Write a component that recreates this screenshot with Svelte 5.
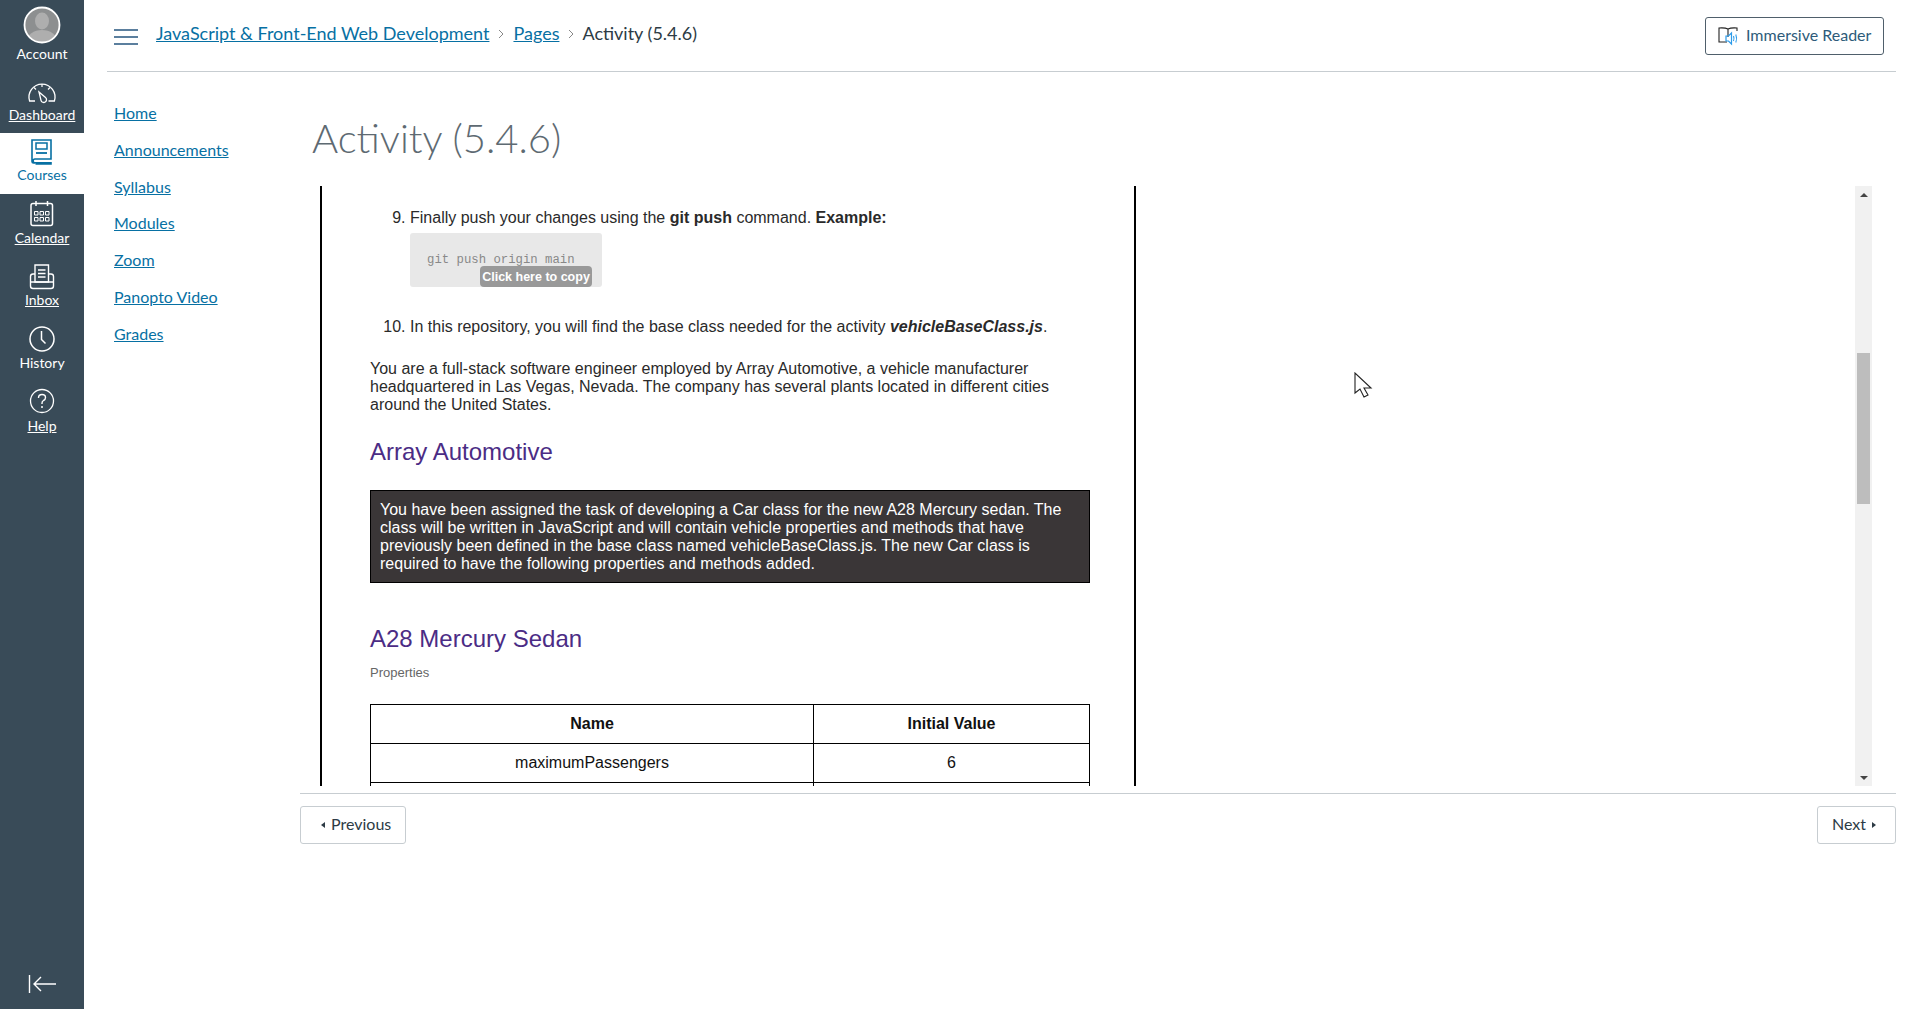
<script>
  const navItems = [
    { label: 'Account', icon: 'account' },
    { label: 'Dashboard', icon: 'dashboard', underline: true },
    { label: 'Courses', icon: 'courses', active: true },
    { label: 'Calendar', icon: 'calendar', underline: true },
    { label: 'Inbox', icon: 'inbox', underline: true },
    { label: 'History', icon: 'history' },
    { label: 'Help', icon: 'help', underline: true }
  ];
  const courseLinks = ['Home', 'Announcements', 'Syllabus', 'Modules', 'Zoom', 'Panopto Video', 'Grades'];
</script>

<div class="app">
  <nav class="sidebar">
    {#each navItems as item}
      <a class="nav-item" class:active={item.active} class:underline={item.underline} href="#top">
        <svg class="nav-icon" viewBox="0 0 44 44" width="44" height="44" aria-hidden="true">
          {#if item.icon === 'account'}
            <defs><clipPath id="avatar"><circle cx="22" cy="22" r="17" /></clipPath></defs>
            <circle cx="22" cy="22" r="17.5" fill="#8d8f90" />
            <g clip-path="url(#avatar)" fill="#aeaeae">
              <ellipse cx="22" cy="18" rx="7" ry="8.5" />
              <ellipse cx="22" cy="38" rx="15" ry="11" />
            </g>
            <circle cx="22" cy="22" r="17.5" fill="none" stroke="#fff" stroke-width="1.8" />
          {:else if item.icon === 'dashboard'}
            <path d="M15 31 H9.600 A13 13 0 1 1 34.400 31 H28.500" fill="none" stroke="currentColor" stroke-width="1.300" />
            <path d="M19 22 L25.500 27.500 a2.800 2.800 0 1 1 -4.500 2.800 z" fill="none" stroke="currentColor" stroke-width="1.300" />
            <path d="M22 14 v3 M14 17.500 l2 2 M30 17.500 l-2 2" stroke="currentColor" stroke-width="1.200" />
          {:else if item.icon === 'courses'}
            <path d="M15 34 h-1.500 a1.500 1.500 0 0 1 -1.500 -1.500 v-21.500 h19 v19 h-16 a1.800 1.800 0 0 0 0 3.800 h16 v1.200 h-15.500" fill="none" stroke="currentColor" stroke-width="1.600" />
            <rect x="16" y="14" width="11" height="6" fill="none" stroke="currentColor" stroke-width="1.500" />
            <path d="M16 24 h11" stroke="currentColor" stroke-width="1.800" />
          {:else if item.icon === 'calendar'}
            <rect x="11" y="11.500" width="21.500" height="22" rx="2" fill="none" stroke="currentColor" stroke-width="1.500" />
            <path d="M16 9 v5 M27.500 9 v5" stroke="currentColor" stroke-width="1.500" />
            <path d="M14.500 19.500 h3.500 v3.500 h-3.500 z M20 19.500 h3.500 v3.500 h-3.500 z M25.500 19.500 h3.500 v3.500 h-3.500 z M14.500 25.500 h3.500 v3.500 h-3.500 z M20 25.500 h3.500 v3.500 h-3.500 z M25.500 25.500 h3.500 v3.500 h-3.500 z" fill="none" stroke="currentColor" stroke-width="1" />
          {:else if item.icon === 'inbox'}
            <path d="M15 10 h13.500 v17 h-13.500 z" fill="none" stroke="currentColor" stroke-width="1.400" />
            <path d="M18 15 h7.500 M18 18.500 h7.500 M18 22 h7.500" stroke="currentColor" stroke-width="1.400" />
            <path d="M15 19 h-2 q-2.500 0 -2.500 2.500 v9.500 q0 2.500 2.500 2.500 h18 q2.500 0 2.500 -2.500 v-9.500 q0 -2.500 -2.500 -2.500 h-2.500 M10.500 27 h23" fill="none" stroke="currentColor" stroke-width="1.400" />
          {:else if item.icon === 'history'}
            <circle cx="22" cy="22" r="12" fill="none" stroke="currentColor" stroke-width="1.500" />
            <path d="M21.500 14 v8.500 l4 4" fill="none" stroke="currentColor" stroke-width="1.500" />
          {:else if item.icon === 'help'}
            <circle cx="22" cy="22" r="11.500" fill="none" stroke="currentColor" stroke-width="1.300" />
            <path d="M18.500 19 q0 -3.500 3.500 -3.500 q3.500 0 3.500 3 q0 2 -2 3 q-1.500 .8 -1.500 2.800 v.7" fill="none" stroke="currentColor" stroke-width="1.400" />
            <circle cx="22" cy="28" r="1" fill="currentColor" />
          {/if}
        </svg>
        <span class="nav-label">{item.label}</span>
      </a>
    {/each}
    <button class="collapse" aria-label="Collapse navigation">
      <svg viewBox="0 0 28 22" width="28" height="22" aria-hidden="true">
        <path d="M1.500 2 v18 M28 11 h-22 M13 4 l-7 7 l7 7" fill="none" stroke="#fff" stroke-width="1.400" />
      </svg>
    </button>
  </nav>

  <div class="main">
    <header class="topbar">
      <button class="hamburger" aria-label="Toggle course menu">
        <span></span><span></span><span></span>
      </button>
      <div class="crumbs">
        <a href="#top">JavaScript &amp; Front-End Web Development</a>
        <svg class="sep" viewBox="0 0 6 10" width="6" height="10" aria-hidden="true"><path d="M1 1 l4 4 l-4 4" fill="none" stroke="#888" /></svg>
        <a href="#top">Pages</a>
        <svg class="sep last" viewBox="0 0 6 10" width="6" height="10" aria-hidden="true"><path d="M1 1 l4 4 l-4 4" fill="none" stroke="#888" /></svg>
        <span>Activity (5.4.6)</span>
      </div>
      <button class="reader">
        <svg viewBox="0 0 22 20" width="22" height="20" aria-hidden="true">
          <path d="M10 3 q-3 -1.500 -9 -1 v14 h8 M10 3 v8 M10 3 q3 -1.500 9 -1 v3" fill="none" stroke="#222" stroke-width="1.100" />
          <path d="M8 10 h2.500 l3 -3 v11 l-3 -3 h-2.500 z" fill="none" stroke="#2b9bea" stroke-width="1.200" />
          <path d="M15.500 10 q1 2.500 0 5 M17.800 8.500 q1.700 4 0 8" fill="none" stroke="#2b9bea" stroke-width="1.100" />
        </svg>
        Immersive Reader
      </button>
    </header>

    <div class="body">
      <ul class="course-nav">
        {#each courseLinks as link}
          <li><a href="#top">{link}</a></li>
        {/each}
      </ul>

      <div class="content">
        <h1 class="title">Activity (5.4.6)</h1>

        <div class="viewer">
          <div class="page">
            <ol start="9">
              <li>Finally push your changes using the <b>git push</b> command. <b>Example:</b>
                <div class="code">
                  <code>git push origin main</code>
                  <button class="copy">Click here to copy</button>
                </div>
              </li>
            </ol>
            <ol class="next" start="10">
              <li>In this repository, you will find the base class needed for the activity <b><i>vehicleBaseClass.js</i></b>.</li>
            </ol>
            <p class="intro">You are a full-stack software engineer employed by Array Automotive, a vehicle manufacturer headquartered in Las Vegas, Nevada. The company has several plants located in different cities around the United States.</p>
            <h2 class="first">Array Automotive</h2>
            <div class="callout">You have been assigned the task of developing a Car class for the new A28 Mercury sedan. The class will be written in JavaScript and will contain vehicle properties and methods that have previously been defined in the base class named vehicleBaseClass.js. The new Car class is required to have the following properties and methods added.</div>
            <h2 class="second">A28 Mercury Sedan</h2>
            <p class="props">Properties</p>
            <table>
              <thead>
                <tr><th class="name">Name</th><th>Initial Value</th></tr>
              </thead>
              <tbody>
                <tr><td>maximumPassengers</td><td>6</td></tr>
                <tr><td></td><td></td></tr>
              </tbody>
            </table>
          </div>
          <div class="scrollbar">
            <span class="arrow up"></span>
            <div class="track"><div class="thumb"></div></div>
            <span class="arrow down"></span>
          </div>
        </div>

        <footer class="pager">
          <button class="page-btn prev"><span class="tri left"></span>Previous</button>
          <button class="page-btn next-btn">Next<span class="tri right"></span></button>
        </footer>
      </div>
    </div>
  </div>

  <svg class="cursor" viewBox="0 0 20 30" width="20" height="30" aria-hidden="true">
    <path d="M1 1 v20 l5 -4 l4 8 l4 -2 l-4 -7 h7 z" fill="#fff" stroke="#222" stroke-width="1.100" />
  </svg>
</div>

<style>
  :global(body) {
    margin: 0;
    background: #fff;
    font-family: Lato, "Liberation Sans", sans-serif;
  }

  .app {
    display: flex;
    height: 1009px;
    overflow: hidden;
    position: relative;
  }

  .sidebar {
    width: 84px;
    flex: none;
    background: #394b58;
    display: flex;
    flex-direction: column;
    align-items: stretch;
  }

  .nav-item {
    height: 62px;
    box-sizing: border-box;
    display: flex;
    flex-direction: column;
    align-items: center;
    color: #fff;
    text-decoration: none;
    font-size: 14px;
    line-height: 16px;
  }

  .nav-item:first-child {
    height: 67px;
    padding-top: 3px;
  }

  .nav-item:nth-child(2) {
    height: 66px;
    padding-top: 4px;
  }

  .nav-item.active {
    height: 61px;
    background: #fff;
    color: #0770a3;
  }

  .nav-item.underline .nav-label {
    text-decoration: underline;
  }

  .nav-icon {
    display: block;
    margin: -1px 0 -6px;
  }

  .nav-item:first-child .nav-icon {
    margin: 0 0 -1px;
  }

  .nav-item:nth-child(2) .nav-icon {
    margin-bottom: -7px;
  }

  .nav-item:nth-child(3) .nav-icon {
    margin-top: -4px;
  }

  .nav-item:nth-child(4) .nav-icon {
    margin-top: -2px;
  }

  .nav-item:nth-child(5) .nav-icon {
    margin-bottom: -7px;
  }

  .nav-item:nth-child(7) .nav-icon {
    margin-bottom: -5px;
  }

  .collapse {
    margin-top: auto;
    margin-bottom: 14px;
    align-self: center;
    background: none;
    border: 0;
    padding: 0;
    height: 22px;
  }

  .main {
    flex: 1;
    min-width: 0;
    margin: 0 24px 0 23px;
    display: flex;
    flex-direction: column;
  }

  .topbar {
    height: 71px;
    border-bottom: 1px solid #c7cdd1;
    display: flex;
    align-items: flex-start;
    flex: none;
  }

  .hamburger {
    width: 24px;
    margin: 29px 0 0 7px;
    padding: 0;
    background: none;
    border: 0;
    display: flex;
    flex-direction: column;
    gap: 5px;
  }

  .hamburger span {
    display: block;
    height: 2px;
    background: #5b7f9e;
  }

  .crumbs {
    margin: 21px 0 0 18px;
    display: flex;
    align-items: center;
    font-size: 18px;
    line-height: 24px;
    color: #2d3b45;
  }

  .crumbs a {
    color: #0770a3;
  }

  .sep {
    margin: 2px 9px 0 9px;
  }

  .sep.last {
    margin: 2px 8px 0 9px;
  }

  .reader {
    margin: 17px 12px 0 auto;
    width: 179px;
    height: 38px;
    box-sizing: border-box;
    background: #fff;
    border: 1px solid #4f5f6b;
    border-radius: 3px;
    color: #2d5b7a;
    font: 16px Lato, sans-serif;
    display: flex;
    align-items: center;
    gap: 6px;
    padding: 0 0 3px 12px;
  }

  .reader svg {
    margin-top: 3px;
  }

  .body {
    flex: 1;
    display: flex;
    min-height: 0;
  }

  .course-nav {
    width: 193px;
    flex: none;
    box-sizing: border-box;
    list-style: none;
    margin: 0;
    padding: 31px 0 0 7px;
    font-size: 16px;
    line-height: 20px;
  }

  .course-nav li {
    margin-bottom: 16.800px;
  }

  .course-nav a {
    color: #0770a3;
  }

  .content {
    flex: 1;
    min-width: 0;
  }

  .title {
    margin: 0;
    height: 114px;
    box-sizing: border-box;
    padding: 41px 0 0 12px;
    font-size: 40px;
    line-height: 50px;
    font-weight: 300;
    color: #5e6a72;
  }

  .viewer {
    display: flex;
    justify-content: space-between;
    height: 600px;
    margin: 0 24px 0 20px;
  }

  .page {
    width: 816px;
    box-sizing: border-box;
    height: 600px;
    overflow: hidden;
    border-left: 2px solid #000;
    border-right: 2px solid #000;
    padding: 23px 44px 0 48px;
    font-family: "Liberation Sans", Arial, sans-serif;
    font-size: 16px;
    line-height: 18px;
    color: #2a2a2a;
  }

  ol {
    margin: 0;
    padding-left: 40px;
  }

  ol.next {
    margin-top: 31px;
  }

  .code {
    position: relative;
    width: 192px;
    height: 54px;
    margin-top: 6px;
    background: #e8e8e8;
    border-radius: 3px;
  }

  .code code {
    position: absolute;
    left: 17px;
    top: 18px;
    font-family: "Liberation Mono", monospace;
    font-size: 12.300px;
    line-height: 18px;
    color: #888;
  }

  .copy {
    position: absolute;
    right: 10px;
    bottom: 0;
    width: 112px;
    height: 21px;
    padding: 0;
    background: #999;
    border: 0;
    border-radius: 4px;
    color: #fff;
    white-space: nowrap;
    font: bold 12.500px "Liberation Sans", Arial, sans-serif;
  }

  .intro {
    margin: 24px 0 0;
  }

  h2 {
    font-weight: 400;
    font-size: 24px;
    line-height: 28px;
    color: #4b2c85;
    margin: 0;
  }

  h2.first {
    margin-top: 24px;
  }

  h2.second {
    margin-top: 42px;
  }

  .callout {
    margin-top: 24px;
    width: 720px;
    box-sizing: border-box;
    background: #3a3637;
    border: 1px solid #000;
    color: #fff;
    padding: 10px 9px 9px;
  }

  .props {
    margin: 12px 0 0;
    font-size: 13px;
    line-height: 16px;
    color: #666;
  }

  table {
    width: 720px;
    margin-top: 23px;
    border-collapse: collapse;
    color: #111;
  }

  th, td {
    border: 1px solid #000;
    text-align: center;
    height: 38px;
    padding: 0;
  }

  .name {
    width: 442px;
  }

  .scrollbar {
    width: 17px;
    background: #f1f1f1;
    display: flex;
    flex-direction: column;
    align-items: center;
    position: relative;
  }

  .track {
    flex: 1;
    width: 100%;
    position: relative;
  }

  .thumb {
    position: absolute;
    left: 2px;
    right: 2px;
    top: 167px;
    height: 151px;
    background: #bdbdbd;
  }

  .arrow {
    position: absolute;
    left: 5px;
    width: 0;
    height: 0;
    border-left: 4px solid transparent;
    border-right: 4px solid transparent;
  }

  .arrow.up {
    top: 7px;
    border-bottom: 4px solid #444;
  }

  .arrow.down {
    bottom: 6px;
    border-top: 4px solid #444;
  }

  .pager {
    margin-top: 7px;
    border-top: 1px solid #c7cdd1;
    padding-top: 12px;
    display: flex;
    justify-content: space-between;
  }

  .page-btn {
    height: 38px;
    box-sizing: border-box;
    background: #fff;
    border: 1px solid #c7cdd1;
    border-radius: 3px;
    color: #2d3b45;
    font: 16px Lato, sans-serif;
    display: flex;
    align-items: center;
    gap: 6px;
  }

  .page-btn.prev {
    padding: 0 14px 3px 20px;
  }

  .page-btn.next-btn {
    padding: 0 19px 3px 14px;
  }

  .tri {
    width: 0;
    height: 0;
    margin-top: 3px;
    border-top: 3px solid transparent;
    border-bottom: 3px solid transparent;
  }

  .tri.left {
    border-right: 4px solid #2d3b45;
  }

  .tri.right {
    border-left: 4px solid #2d3b45;
  }

  .cursor {
    position: absolute;
    left: 1354px;
    top: 372px;
  }
</style>
